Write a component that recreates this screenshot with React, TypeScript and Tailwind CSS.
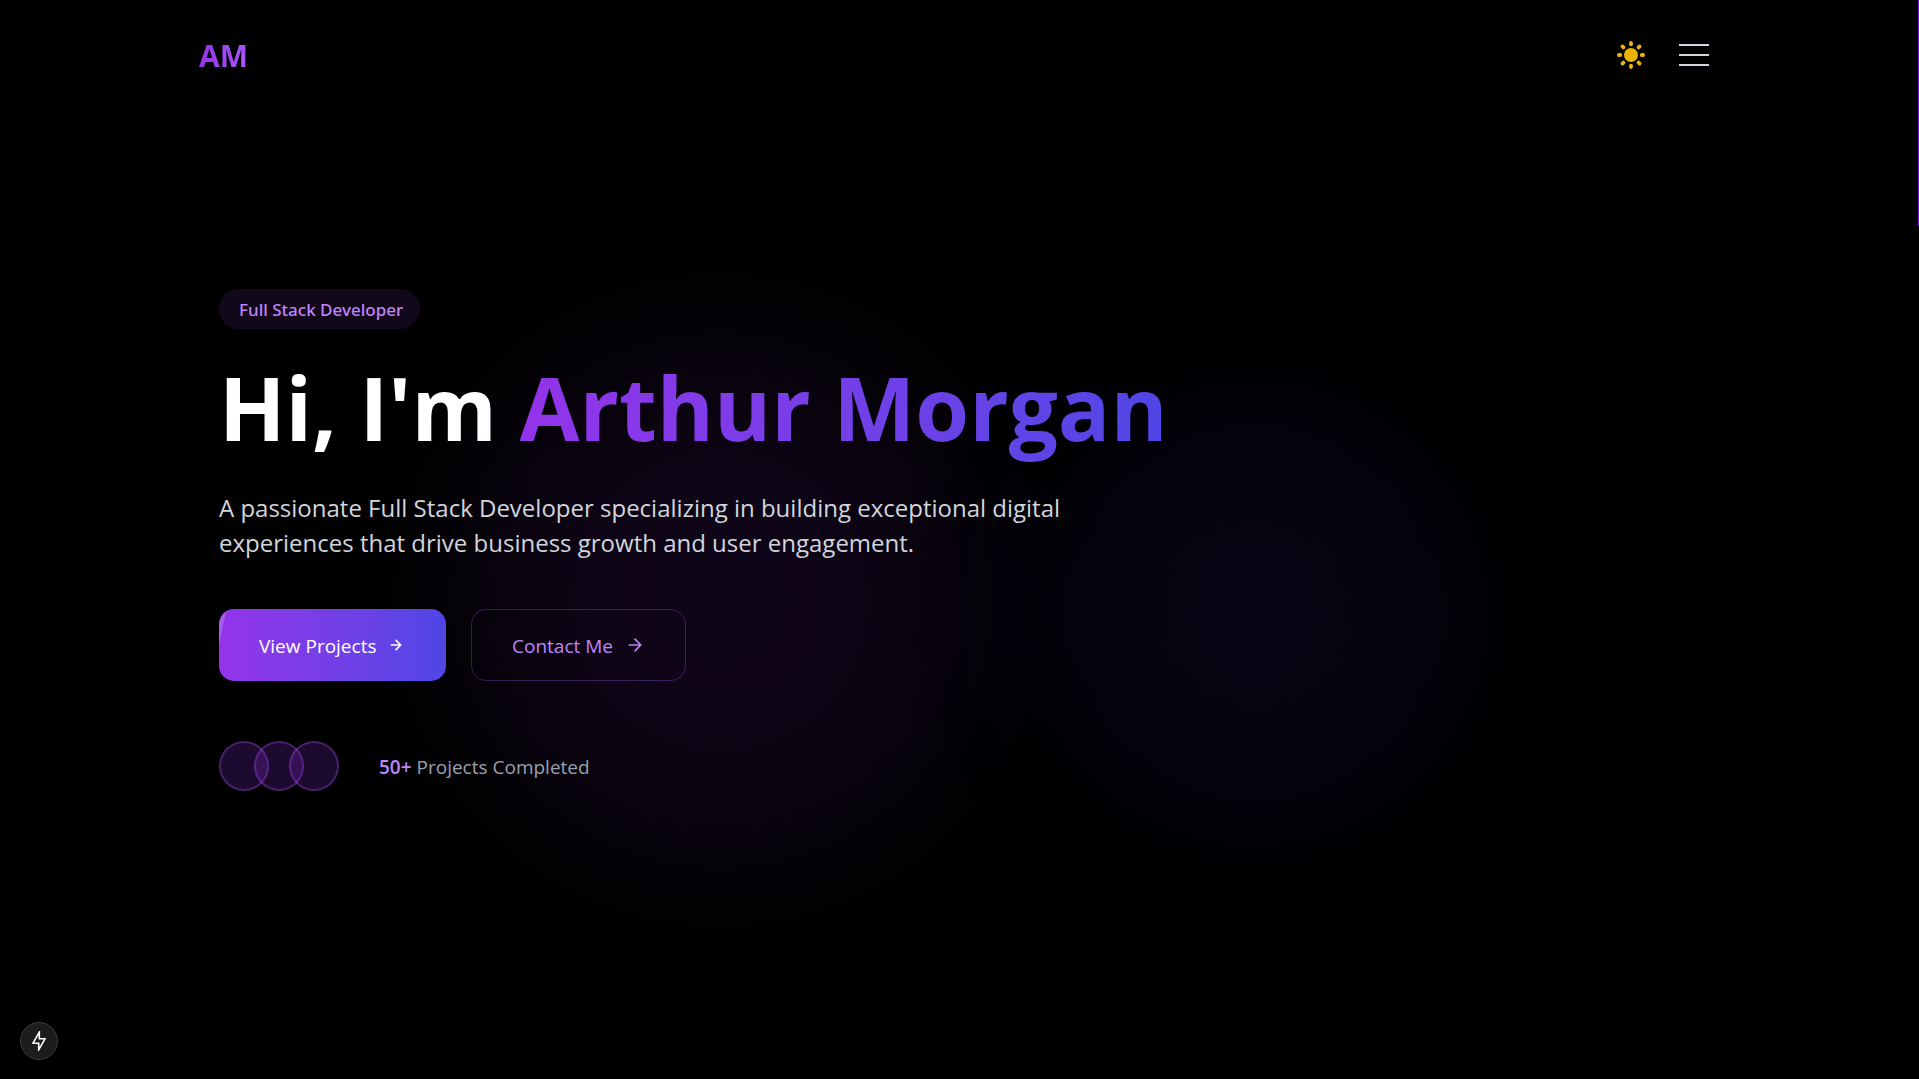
import { useState } from "react";

function SunIcon() {
  const angles = [0, 45, 90, 135, 180, 225, 270, 315];
  return (
    <svg viewBox="0 0 30 30" className="size-[30px]" fill="currentColor" aria-hidden="true">
      <circle cx="15" cy="15" r="7" />
      {angles.map((a) => (
        <rect key={a} x="13.1" y="1" width="3.8" height="5.2" rx="1.9" transform={`rotate(${a} 15 15)`} />
      ))}
    </svg>
  );
}

function ArrowIcon({ className }: { className: string }) {
  return (
    <svg viewBox="0 0 24 24" className={className} fill="none" stroke="currentColor" strokeLinecap="round" strokeLinejoin="round" aria-hidden="true">
      <path d="M5 12h14M12 5l7 7-7 7" />
    </svg>
  );
}

function BoltIcon() {
  return (
    <svg viewBox="0 0 20 20" className="size-5" fill="none" stroke="currentColor" strokeWidth="1.6" aria-hidden="true">
      <path d="M10.3 1.2V7.8H16L9.7 18.8V12.2H4z" />
    </svg>
  );
}

function Header() {
  const [open, setOpen] = useState(false);
  return (
    <header className="relative z-10 mx-auto flex w-full max-w-[1600px] items-center justify-between px-10 pt-[30px]">
      <a href="#home" className="bg-linear-to-r from-[#9333ea] to-[#a855f7] bg-clip-text pt-0.5 text-[30px] leading-[48px] font-bold text-transparent">
        AM
      </a>
      <div className="flex items-center gap-[15px]">
        <button type="button" aria-label="Toggle theme" className="rounded-full p-2 text-[#eab308]">
          <SunIcon />
        </button>
        <button type="button" aria-label="Menu" aria-expanded={open} onClick={() => setOpen(!open)} className="flex flex-col gap-2 p-[10px]">
          <span className="h-0.5 w-[30px] bg-gray-300" />
          <span className="h-0.5 w-[30px] bg-gray-300" />
          <span className="h-0.5 w-[30px] bg-gray-300" />
        </button>
      </div>
    </header>
  );
}

function Hero() {
  return (
    <main id="home" className="relative z-10 mx-auto w-full max-w-[1600px] px-[60px] pt-[209px]">
      <span className="inline-flex h-10 items-center rounded-full bg-[#a855f7]/10 pt-0.5 pr-[17px] pl-5 font-['Noto_Sans',sans-serif] text-[17px] font-medium text-[#c084fc]">
        Full Stack Developer
      </span>
      <h1 className="mt-[33px] text-[87px] leading-[90px] font-bold whitespace-nowrap text-white">
        Hi, I'm{" "}
        <span className="bg-linear-to-r from-[#9333ea] to-[#4f46e5] bg-clip-text pb-3 text-transparent">Arthur Morgan</span>
      </h1>
      <p className="mt-[38px] max-w-[860px] text-[24px] leading-[35px] text-gray-300">
        A passionate Full Stack Developer specializing in building exceptional digital experiences that drive business growth and user engagement.
      </p>
      <div className="mt-[49px] flex items-center gap-[25px]">
        <a href="#projects" className="relative flex h-[72px] w-[227px] items-center gap-3 overflow-hidden rounded-[15px] bg-linear-to-r from-[#9333ea] to-[#4f46e5] pl-10 text-[19px] font-medium text-white">
          <span className="absolute inset-0 -translate-x-full -skew-x-12 bg-white/20" />
          <span className="pt-0.5">View Projects</span>
          <ArrowIcon className="size-4 stroke-[2.5]" />
        </a>
        <a href="#contact" className="flex h-[72px] w-[215px] items-center gap-3 rounded-[15px] border border-[#a855f7]/30 pl-10 text-[19px] text-[#c084fc]">
          <span className="pt-0.5">Contact Me</span>
          <ArrowIcon className="size-5 stroke-2" />
        </a>
      </div>
      <div className="mt-[60px] flex items-center gap-10">
        <div className="flex -space-x-[15px]">
          <span className="size-[50px] rounded-full border-2 border-[#a855f7]/30 bg-[#9333ea]/20" />
          <span className="size-[50px] rounded-full border-2 border-[#a855f7]/30 bg-[#9333ea]/20" />
          <span className="size-[50px] rounded-full border-2 border-[#a855f7]/30 bg-[#9333ea]/20" />
        </div>
        <p className="pt-0.5 text-[19px] text-gray-400">
          <strong className="font-semibold text-[#c084fc]">50+</strong> Projects Completed
        </p>
      </div>
    </main>
  );
}

export default function App() {
  return (
    <div className="relative flex min-h-screen flex-col overflow-hidden bg-black pr-px font-['Open_Sans',sans-serif]">
      <div className="absolute top-[360px] left-1/4 size-[480px] rounded-full bg-[#9333ea]/10 blur-[80px]" />
      <div className="absolute top-[413px] left-[55%] size-[400px] rounded-full bg-[#4444ff]/8 blur-[80px]" />
      <Header />
      <Hero />
      <div className="absolute top-0 right-0 h-[226px] w-px bg-[#9000ff]" />
      <button type="button" aria-label="Developer tools" className="absolute bottom-[19px] left-5 flex size-[38px] items-center justify-center rounded-full border border-[#3d3d3f] bg-[#1c1c1e] text-white">
        <BoltIcon />
      </button>
    </div>
  );
}
